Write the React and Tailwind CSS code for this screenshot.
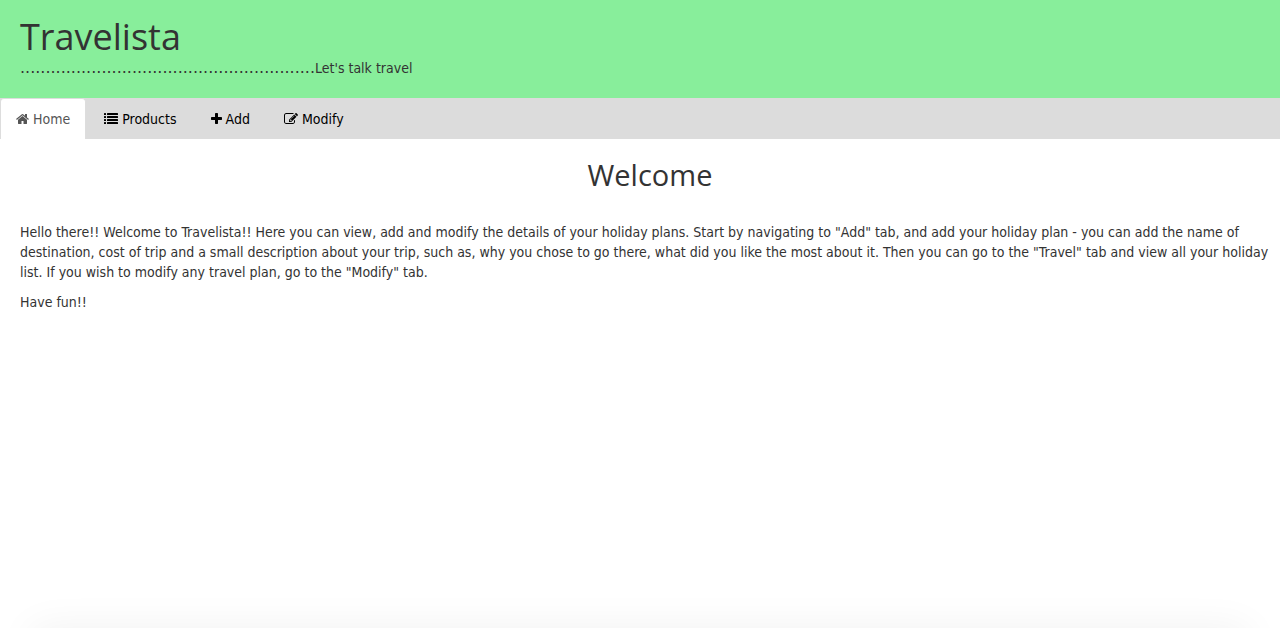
import React, { useState } from "react";

function HomeIcon() {
  return (
    <svg viewBox="64 0 1664 1792" className="h-3.5 w-[13px] shrink-0" fill="currentColor" aria-hidden="true">
      <path d="M1472 992v480q0 26-19 45t-45 19h-384v-384h-256v384h-384q-26 0-45-19t-19-45v-480q0-1 .5-3t.5-3l575-474 575 474q1 2 1 6zm223-69l-62 74q-8 9-21 11h-3q-13 0-21-7l-692-577-692 577q-12 8-24 7-13-2-21-11l-62-74q-8-10-7-23.5t11-21.5l719-599q32-26 76-26t76 26l244 204v-195q0-14 9-23t23-9h192q14 0 23 9t9 23v408l219 182q10 8 11 21.5t-7 23.5z" />
    </svg>
  );
}

function ListIcon() {
  return (
    <svg viewBox="0 0 1792 1792" className="h-3.5 w-3.5 shrink-0" fill="currentColor" aria-hidden="true">
      {[128, 512, 896, 1280].map((y) => (
        <g key={y}>
          <rect x="0" y={y} width="256" height="256" rx="32" />
          <rect x="384" y={y} width="1408" height="256" rx="32" />
        </g>
      ))}
    </svg>
  );
}

function PlusIcon() {
  return (
    <svg viewBox="192 0 1408 1792" className="h-3.5 w-[11px] shrink-0" fill="currentColor" aria-hidden="true">
      <path d="M1600 736v192q0 40-28 68t-68 28h-416v416q0 40-28 68t-68 28h-192q-40 0-68-28t-28-68v-416h-416q-40 0-68-28t-28-68v-192q0-40 28-68t68-28h416v-416q0-40 28-68t68-28h192q40 0 68 28t28 68v416h416q40 0 68 28t28 68z" />
    </svg>
  );
}

function EditIcon() {
  return (
    <svg viewBox="0 0 1792 1792" className="h-3.5 w-3.5 shrink-0" fill="currentColor" aria-hidden="true">
      <path d="M888 1184l116-116-152-152-116 116v56h96v96h56zm440-720q-16-16-33 1l-350 350q-17 17-1 33t33-1l350-350q17-17 1-33zm80 594v190q0 119-84.5 203.5t-203.5 84.5h-832q-119 0-203.5-84.5t-84.5-203.5v-832q0-119 84.5-203.5t203.5-84.5h832q63 0 117 25 15 7 18 23 3 17-9 29l-49 49q-14 14-32 8-23-6-45-6h-832q-66 0-113 47t-47 113v832q0 66 47 113t113 47h832q66 0 113-47t47-113v-126q0-13 9-22l64-64q15-15 35-7t20 29zm-96-738l288 288-672 672h-288v-288zm444 132l-92 92-288-288 92-92q28-28 68-28t68 28l152 152q28 28 28 68t-28 68z" />
    </svg>
  );
}

const tabs = [
  { name: "Home", Icon: HomeIcon },
  { name: "Products", Icon: ListIcon },
  { name: "Add", Icon: PlusIcon },
  { name: "Modify", Icon: EditIcon },
];

export default function App() {
  const [active, setActive] = useState("Home");
  return (
    <div className="min-h-screen overflow-hidden bg-white font-['DejaVu_Sans_Condensed','Open_Sans',sans-serif] text-sm leading-5 text-[#333]">
      <header className="bg-[#88ee9b] px-5 pt-4 pb-5">
        <h1 className="font-['Open_Sans',sans-serif] text-4xl leading-[42px] font-medium">Travelista</h1>
        <p className="flex items-baseline">
          <span className="font-['DejaVu_Sans',sans-serif] text-base leading-5">..........................................................</span>
          <span>Let's talk travel</span>
        </p>
      </header>
      <nav className="bg-[#dcdcdc]">
        <ul className="flex gap-0.5">
          {tabs.map(({ name, Icon }) => (
            <li key={name}>
              <a
                href={"#" + name.toLowerCase()}
                onClick={() => setActive(name)}
                aria-current={active === name ? "page" : undefined}
                className={
                  active === name
                    ? "flex items-center gap-1 rounded-t border border-b-0 border-[#ddd] bg-white px-[15px] py-2.5 text-[#555]"
                    : "flex items-center gap-1 rounded-t border border-b-0 border-transparent px-[15px] py-2.5 text-black"
                }
              >
                <Icon />
                {name}
              </a>
            </li>
          ))}
        </ul>
      </nav>
      <main className="pt-5 pl-5">
        <h2 className="text-center font-['Open_Sans',sans-serif] text-[29px] leading-8 font-medium">Welcome</h2>
        <p className="mt-[31px]">
          Hello there!! Welcome to Travelista!! Here you can view, add and modify the details of your holiday plans. Start by navigating to "Add" tab, and add your holiday plan - you can add the name of destination, cost of trip and a small description about your trip, such as, why you chose to go there, what did you like the most about it. Then you can go to the "Travel" tab and view all your holiday list. If you wish to modify any travel plan, go to the "Modify" tab.
        </p>
        <p className="mt-2.5">Have fun!!</p>
      </main>
      <div className="pointer-events-none fixed inset-x-8 top-full h-20 shadow-[0_0_40px_rgba(0,0,0,0.06)]" />
    </div>
  );
}
